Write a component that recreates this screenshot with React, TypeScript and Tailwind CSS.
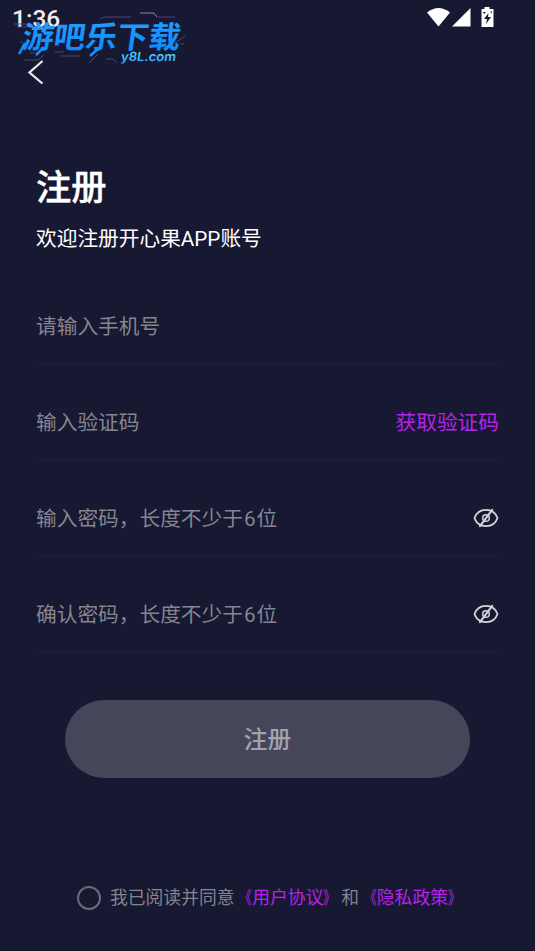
import React from "react";

function EyeOff() {
  return (
    <svg className="-mt-1" width="26" height="20" viewBox="0 0 26 20" fill="none" stroke="#d6d6dc" strokeWidth="1.8" strokeLinecap="round">
      <path d="M1.500 10C3.200 5 7.500 1.800 13 1.800S22.800 5 24.500 10c-1.700 5-6 8.200-11.500 8.200S3.200 15 1.500 10Z" />
      <circle cx="13" cy="10" r="3.300" strokeWidth="1.500" />
      <path d="M19.200 1.800 7 18.200" strokeWidth="2" />
    </svg>
  );
}

function Field({ label, children }: { label: React.ReactNode; children?: React.ReactNode }) {
  return (
    <div className="flex h-24 items-center justify-between border-b border-[#20213a] pt-[22px] text-[20.7px] text-[#85858f]">
      <span>{label}</span>
      {children}
    </div>
  );
}

function PasswordHint({ action }: { action: string }) {
  return <>{action}密码，长度不少于<span className="px-px">6</span>位</>;
}

function PolicyLink({ name }: { name: string }) {
  return (
    <a className="text-[#b722eb]">
      <span className="inline-block origin-right scale-x-[0.7]">《</span>
      {name}
      <span className="inline-block origin-left scale-x-[0.7]">》</span>
    </a>
  );
}

function StatusIcons() {
  return (
    <svg width="68" height="22" viewBox="0 0 68 22" fill="#fff">
      <path d="M0 5.500Q11.500-3.500 23 5.500L11.500 19.500Z" />
      <path d="M43.500 1v18.500H25Z" />
      <path d="M57.500 0h5v2h3.500q.5 0 .5.500v17q0 .5-.5.500h-11q-.5 0-.5-.5V2.500q0-.5.500-.5h2.500Z" />
      <path d="m61.500 6-4.500 6h3l-1 5 5-7h-3Z" fill="#171831" />
      <path d="M56 5h3l-2 2zM65 4.500h-2l2 2z" fill="#171831" />
    </svg>
  );
}

function Watermark() {
  return (
    <svg className="absolute left-0 top-0" width="200" height="72" viewBox="0 0 200 72" fill="none">
      <defs>
        <linearGradient id="blue" x1="0" y1="0" x2="0" y2="1">
          <stop offset="0" stopColor="#2ba0ff" />
          <stop offset="1" stopColor="#078aff" />
        </linearGradient>
        <linearGradient id="cyan" x1="0" y1="0" x2="0" y2="1">
          <stop offset="0" stopColor="#62dcff" />
          <stop offset="1" stopColor="#29a5ff" />
        </linearGradient>
      </defs>
      <g stroke="#484679" strokeWidth="1">
        <path d="M14 24h12M17 27h10M100 19l4-2h27M20 42h3M30 53h4M55 52h9M61 56h19M24 60h14l6-5M89 63l9-9M106 59h7l4 4M158 17h17M171 46l14-10M180 44h4" />
        <path d="M140 13h14l3 4" stroke="#8b82bd" />
      </g>
      <text transform="translate(21 47.500) skewX(-8) scale(1 .95)" fontSize="32" fontWeight="700" textLength="158" lengthAdjust="spacingAndGlyphs" fill="url(#blue)" fontFamily="Noto Sans CJK SC, sans-serif">游吧乐下载</text>
      <path d="m25 43-6 11M44 47l-8 8M99 48l-9 8" stroke="#1193ff" strokeWidth="2.500" />
      <text transform="translate(120.500 61) skewX(-8)" fontSize="12.500" fontWeight="600" textLength="55" lengthAdjust="spacingAndGlyphs" fill="url(#cyan)" fontFamily="Inter, sans-serif">y8L.com</text>
    </svg>
  );
}

export default function App() {
  return (
    <main lang="zh-CN" className="relative flex h-[951px] w-[535px] flex-col overflow-hidden bg-[#171831] font-['Roboto','Noto_Sans_CJK_SC',sans-serif] text-white">
      <header className="flex h-[60px] items-start justify-between pl-3 pr-[40px] pt-[7px]">
        <time className="text-[24.500px] font-medium leading-[24px] text-[#eeeef2]">1:36</time>
        <StatusIcons />
      </header>
      <nav className="h-[100px] pl-7">
        <svg width="16" height="24" viewBox="0 0 16 24" fill="none" stroke="#e8e8ed" strokeWidth="2.200">
          <path d="M14.500 1 1.500 12.500l13 11" />
        </svg>
      </nav>
      <div className="flex flex-col px-9">
        <h1 className="mt-px h-[54px] text-[35.300px] font-medium leading-[54px] [-webkit-text-stroke:0.4px_white]">注册</h1>
        <p className="mt-[9px] h-[30px] text-[20.700px] leading-[30px]">欢迎注册开心果APP账号</p>
        <form className="mt-[15px] flex flex-col">
          <Field label="请输入手机号" />
          <Field label="输入验证码"><span className="text-[#b722eb]">获取验证码</span></Field>
          <Field label={<PasswordHint action="输入" />}><EyeOff /></Field>
          <Field label={<PasswordHint action="确认" />}><EyeOff /></Field>
        </form>
        <button className="mx-[29px] mt-[47px] h-[78px] rounded-full bg-[#46465a] pt-1 text-[23.700px] font-medium text-[#a3a3ad]">注册</button>
      </div>
      <footer className="mt-[106px] flex h-[28px] items-center pl-[77px] text-[17.800px] text-[#85858f]">
        <span className="mr-[9px] size-6 rounded-full border-2 border-[#6b6b78]" />
        <span className="pt-px">我已阅读并同意<PolicyLink name="用户协议" />和<PolicyLink name="隐私政策" /></span>
      </footer>
      <Watermark />
    </main>
  );
}
